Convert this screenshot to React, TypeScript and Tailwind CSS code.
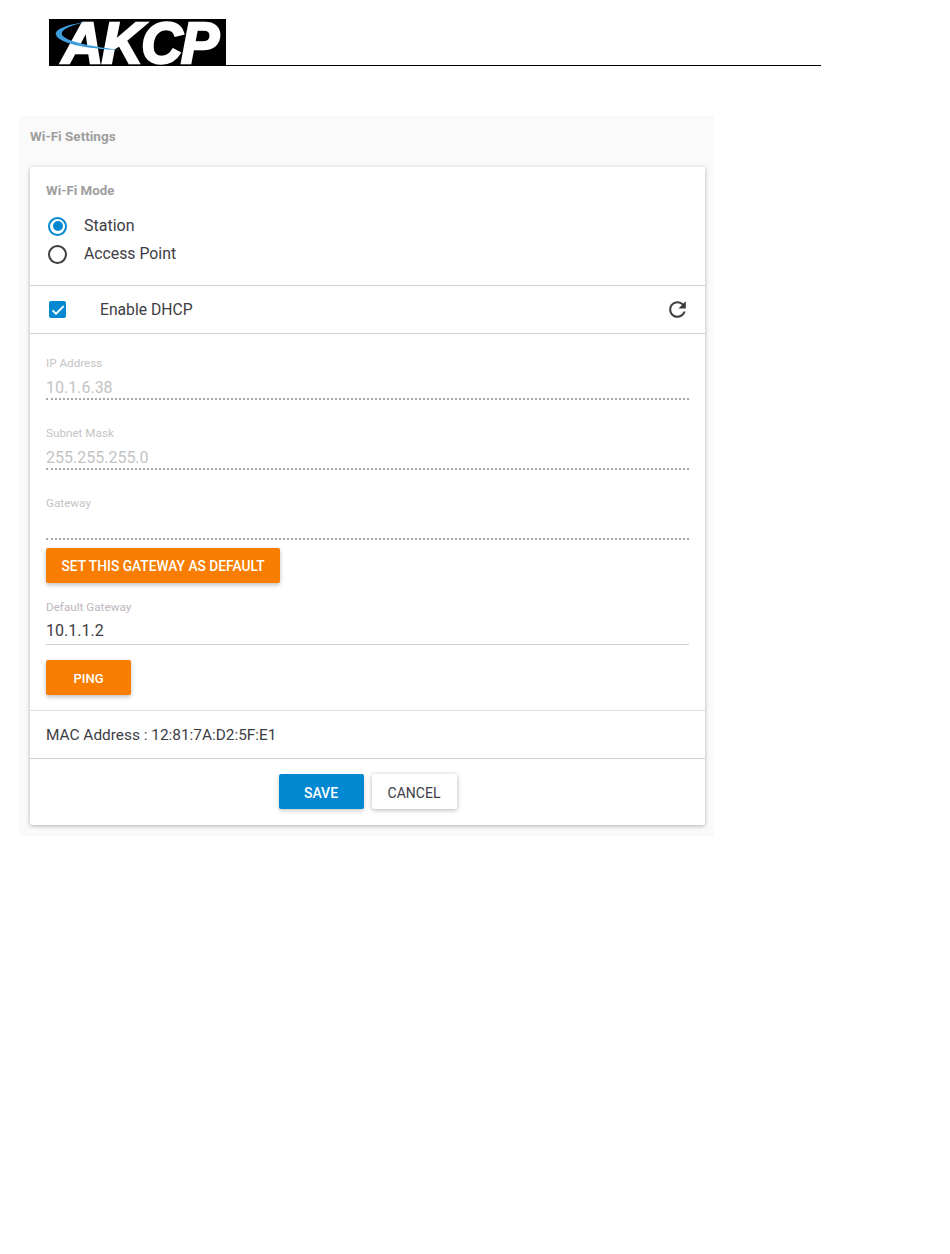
function Logo() {
  return (
    <div className="relative w-[177px] h-[47px] bg-black">
      <span className="block pl-[13px] pt-[1px] text-[57px] leading-[46px] font-bold italic text-white font-['Liberation_Sans',sans-serif] tracking-[-1.5px] whitespace-nowrap [-webkit-text-stroke:2.5px_white]">
        AKCP
      </span>
      <svg className="absolute left-0 top-0" width="177" height="47" viewBox="0 0 177 47" fill="none">
        <path d="M36 3 C16 6 5 11 7 16 C10 24 35 30 72 31 C45 28 18 23 13 16 C11 11 20 7 36 3 Z" fill="#3f9ddc" />
      </svg>
    </div>
  );
}

function Field({ label, value, disabled }: { label: string; value?: string; disabled?: boolean }) {
  return (
    <div>
      <div className={`text-[11.7px] leading-[14px] ${disabled ? 'h-[15px] text-[#c4c4c4]' : 'text-[#bdb6bd]'}`}>{label}</div>
      <div
        className={`pt-[6px] text-base leading-[22px] ${
          disabled
            ? 'h-[29px] text-[#c2c4c6] border-b-2 border-dotted border-[#a8a8a8]'
            : 'h-[31px] text-[#3d3d45] border-b border-[#cfcfcf]'
        }`}
      >
        {value}
      </div>
    </div>
  );
}

export default function App() {
  return (
    <div className="min-h-[1254px] bg-white font-['Roboto',sans-serif] text-[#3d3d45]">
      <div className="flex pl-[49px] pt-[19px]">
        <Logo />
        <div className="w-[595px] h-[47px] border-b border-black" />
      </div>

      <div className="mt-[50px] ml-[19px] w-[695px] h-[720px] bg-[#fafafa] pl-[11px] pr-[9px]">
        <div className="h-[51px] pt-[11px] text-[13.5px] leading-[18px] font-bold text-[#9e9e9e]">Wi-Fi Settings</div>

        <div className="bg-white rounded-[2px] shadow-[0_1px_4px_rgba(0,0,0,0.3)]">
          <div className="h-[119px] px-4 pt-[16px] border-b border-[#d0d0d0]">
            <div className="text-[13.3px] leading-4 font-bold text-[#9e9e9e]">Wi-Fi Mode</div>
            <div className="mt-[13px] flex items-center h-7">
              <span className="ml-[2px] w-[19px] h-[19px] rounded-full border-2 border-[#0288d1] flex items-center justify-center">
                <span className="w-[10px] h-[10px] rounded-full bg-[#0288d1]" />
              </span>
              <span className="ml-[17px] text-base">Station</span>
            </div>
            <div className="flex items-center h-7">
              <span className="ml-[2px] w-[19px] h-[19px] rounded-full border-2 border-[#3d3d3d]" />
              <span className="ml-[17px] text-[15.8px]">Access Point</span>
            </div>
          </div>

          <div className="h-[48px] pl-[19px] pr-[15px] flex items-center border-b border-[#d0d0d0]">
            <span className="w-[17px] h-[17px] rounded-[2px] bg-[#0288d1] flex items-center justify-center">
              <svg width="16" height="16" viewBox="0 0 24 24" fill="white">
                <path d="M9 16.17L4.83 12l-1.42 1.41L9 19 21 7l-1.41-1.41z" stroke="white" strokeWidth="1" />
              </svg>
            </span>
            <span className="ml-[34px] mt-[1px] text-[15.7px] flex-1">Enable DHCP</span>
            <svg width="25" height="25" viewBox="0 0 24 24" fill="#3d3d3d">
              <path d="M17.65 6.35C16.2 4.9 14.21 4 12 4c-4.42 0-7.99 3.58-7.99 8s3.57 8 7.99 8c3.73 0 6.84-2.55 7.73-6h-2.08c-.82 2.33-3.04 4-5.65 4-3.31 0-6-2.69-6-6s2.69-6 6-6c1.66 0 3.14.69 4.22 1.78L13 11h7V4l-2.35 2.35z" />
            </svg>
          </div>

          <div className="h-[377px] px-4 pt-[22px] border-b border-[#e0e0e0]">
            <div className="flex flex-col gap-[26px]">
              <Field label="IP Address" value="10.1.6.38" disabled />
              <Field label="Subnet Mask" value="255.255.255.0" disabled />
              <Field label="Gateway" disabled />
            </div>
            <button className="mt-2 pt-[2px] h-[35px] w-[234px] rounded-[2px] bg-[#f97d00] text-white text-[13.75px] font-medium shadow-[0_2px_4px_rgba(0,0,0,0.25)]">
              SET THIS GATEWAY AS DEFAULT
            </button>
            <div className="mt-[17px]">
              <Field label="Default Gateway" value="10.1.1.2" />
            </div>
            <button className="mt-[15px] pt-[2px] h-[35px] w-[85px] rounded-[2px] bg-[#f97d00] text-white text-[13px] font-medium shadow-[0_2px_4px_rgba(0,0,0,0.25)]">
              PING
            </button>
          </div>

          <div className="h-[48px] px-4 pt-[2px] flex items-center text-[15.4px] border-b border-[#d0d0d0]">
            MAC Address : 12:81:7A:D2:5F:E1
          </div>

          <div className="h-[66px] flex justify-center gap-2 pt-[15px]">
            <button className="pt-[2px] h-[35px] w-[85px] rounded-[2px] bg-[#0288d1] text-white text-sm font-medium shadow-[0_2px_4px_rgba(0,0,0,0.2)]">
              SAVE
            </button>
            <button className="pt-[2px] h-[35px] w-[85px] rounded-[2px] bg-white text-[#3d3d45] text-sm shadow-[0_1px_5px_rgba(0,0,0,0.3)]">
              CANCEL
            </button>
          </div>
        </div>
      </div>
    </div>
  );
}
